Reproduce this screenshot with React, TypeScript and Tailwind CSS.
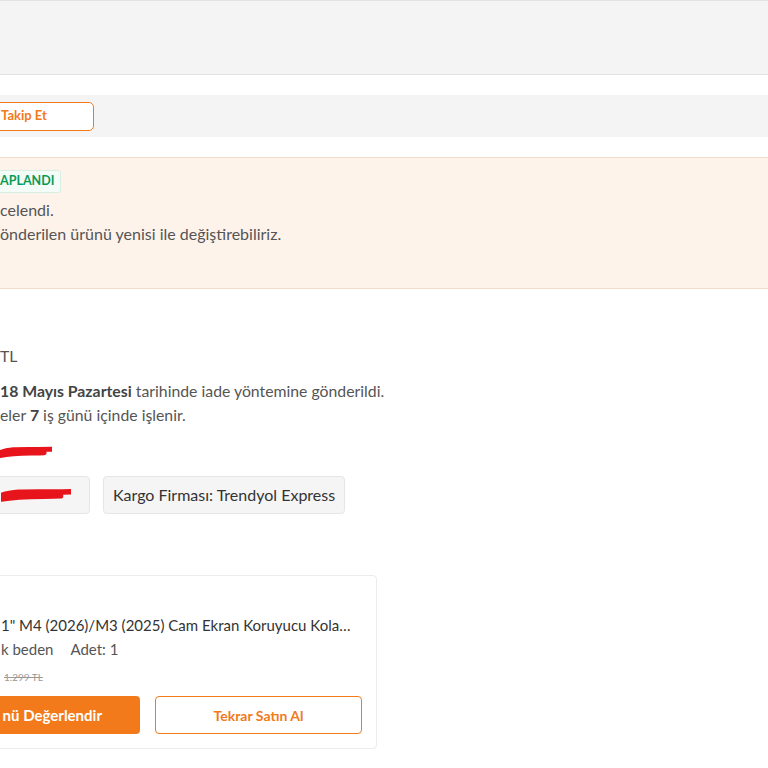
import React from "react";

const font = { fontFamily: "Lato, 'Noto Sans', sans-serif" };

function Scribble({ w, h }: { w: number; h: number }) {
  // hand-drawn red redaction marks
  return (
    <svg width={w} height={h} viewBox={`0 0 ${w} ${h}`} className="block">
      <path
        d={`M0 ${h * 0.55} C ${w * 0.2} ${h * 0.2}, ${w * 0.5} ${h * 0.35}, ${w} ${h * 0.3} M0 ${h * 0.75} C ${w * 0.3} ${h * 0.5}, ${w * 0.6} ${h * 0.6}, ${w * 0.85} ${h * 0.55}`}
        stroke="#e8141b"
        strokeWidth={h * 0.35}
        strokeLinecap="round"
        fill="none"
      />
    </svg>
  );
}

export default function App() {
  return (
    <div className="w-[768px] h-[768px] overflow-hidden bg-white" style={font}>
      {/* header strip */}
      <div className="h-[75px] border-y border-[#e4e4e4] bg-[#f4f4f4]" />

      {/* shipment tracking bar */}
      <div className="mt-[20px] h-[42px] bg-[#f4f4f4] flex items-center">
        <button className="-ml-[46px] w-[140px] h-[29px] rounded-[5px] border border-[#f27a1a] bg-white text-[13px] font-bold text-[#f27a1a]">
          Takip Et
        </button>
      </div>

      {/* return status notice */}
      <div className="mt-[20px] h-[132px] border-y border-[#f3dccd] bg-[#fdf3eb] pt-[12px]">
        <div className="flex w-fit h-[23px] items-center rounded-r-[3px] border border-l-0 border-[#d6efe2] bg-[#f4fcf8] pr-[6px] text-[12.5px] font-bold text-[#0b9a55]">
          APLANDI
        </div>
        <div className="mt-[5px] text-[16px] leading-[24px] text-[#555]">
          <p>celendi.</p>
          <p>önderilen ürünü yenisi ile değiştirebiliriz.</p>
        </div>
      </div>

      {/* refund details */}
      <div className="mt-[55px] text-[15.8px] leading-[24px] text-[#555]">
        <p>TL</p>
        <p className="mt-[11px]">
          <span className="font-bold text-[#444]">18 Mayıs Pazartesi</span> tarihinde iade yöntemine gönderildi.
        </p>
        <p>
          eler <span className="font-bold text-[#444]">7</span> iş günü içinde işlenir.
        </p>
        <div className="mt-[18px] h-[16px]">
          <Scribble w={52} h={14} />
        </div>
        <div className="mt-[15px] flex gap-[13px]">
          <div className="-ml-[10px] flex h-[38px] w-[100px] items-center rounded-[4px] border border-[#e6e6e6] bg-[#f5f5f5] pl-[10px]">
            <Scribble w={70} h={16} />
          </div>
          <div className="flex h-[38px] items-center rounded-[4px] border border-[#e6e6e6] bg-[#f5f5f5] px-[9px] text-[16px] text-[#333]">
            Kargo Firması:&nbsp;Trendyol Express
          </div>
        </div>
      </div>

      {/* product card */}
      <div className="mt-[61px] -ml-[20px] w-[397px] h-[174px] rounded-[4px] border border-[#ececec] bg-white pl-[20px] pt-[37px] pr-[14px]">
        <p className="whitespace-nowrap text-[15px] leading-[24px] text-[#333]">
          1" M4 (2026)/M3 (2025) Cam Ekran Koruyucu Kola…
        </p>
        <p className="flex gap-[17px] text-[15px] leading-[24px] text-[#555]">
          <span>k beden</span>
          <span>Adet: 1</span>
        </p>
        <p className="mt-[9px] pl-[3px] text-[10px] leading-[14px] text-[#999] line-through">1.299 TL</p>
        <div className="mt-[12px] flex gap-[15px]">
          <button className="-ml-[40px] w-[179px] h-[38px] rounded-[4px] bg-[#f27a1a] text-[15px] font-bold text-white text-right pr-[38px]">
            nü Değerlendir
          </button>
          <button className="w-[207px] h-[38px] rounded-[4px] border border-[#f27a1a] bg-white text-[14px] font-bold text-[#f27a1a]">
            Tekrar Satın Al
          </button>
        </div>
      </div>
    </div>
  );
}
